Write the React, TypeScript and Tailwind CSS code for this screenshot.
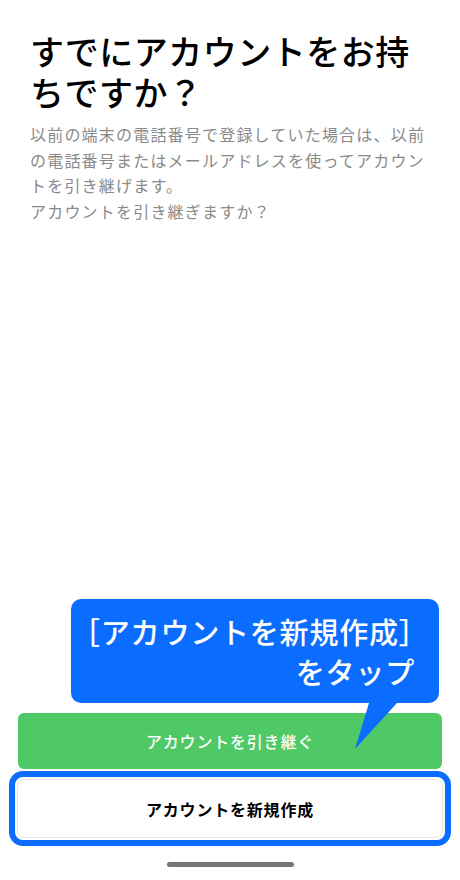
const App = () => {
  return (
    <div
      className="relative flex h-[880px] w-[460px] flex-col overflow-hidden bg-white"
      style={{ fontFamily: '"Noto Sans CJK JP", "Noto Sans", sans-serif' }}
    >
      {/* Heading and description */}
      <div className="px-[30px] pt-[30px]">
        <h1 className="text-[34px] font-medium leading-[41px] tracking-[0.5px] text-black">
          すでにアカウントをお持ちですか？
        </h1>
        <p className="mt-[10px] text-[16px] leading-[25.5px] tracking-[1.2px] text-[#8a8a8a]">
          以前の端末の電話番号で登録していた場合は、以前の電話番号またはメールアドレスを使ってアカウントを引き継げます。
          <br />
          アカウントを引き継ぎますか？
        </p>
      </div>

      <div className="flex-1" />

      {/* Callout */}
      <div className="relative ml-[71px] mr-[21px] rounded-[10px] bg-[#0a6dff] pb-[12px] pr-[24px] pt-[12px] text-right text-[29px] font-medium leading-[40px] tracking-[0.8px] text-white">
        <div>［アカウントを新規作成］</div>
        <div>をタップ</div>
        <svg
          className="absolute left-[282px] top-full z-10"
          width="44"
          height="48"
          viewBox="0 0 44 48"
        >
          <polygon points="16,0 44,0 2,46" fill="#0a6dff" />
        </svg>
      </div>

      {/* Buttons */}
      <div className="mt-[10px] px-[18px]">
        <button className="flex h-[56px] w-full items-center justify-center rounded-[6px] bg-[#4fc866] text-[16px] font-medium tracking-[0.8px] text-white">
          アカウントを引き継ぐ
        </button>
      </div>
      <div className="mx-[9px] mt-[2px] rounded-[14px] border-[6px] border-[#0a6dff] p-[2px]">
        <button className="flex h-[59px] w-full items-center justify-center rounded-[7px] border border-[#e6e6e6] bg-white text-[16px] font-bold tracking-[0.8px] text-black">
          アカウントを新規作成
        </button>
      </div>

      {/* Home indicator */}
      <div className="flex h-[34px] items-center justify-center pt-[2px]">
        <div className="h-[5px] w-[127px] rounded-full bg-[#777777]" />
      </div>
    </div>
  );
};

export default App;
